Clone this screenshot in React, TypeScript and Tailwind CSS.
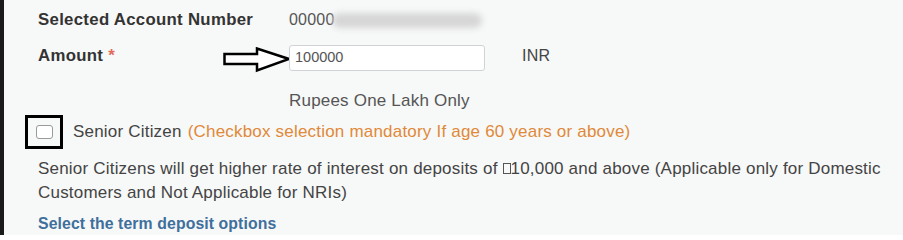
export default function App() {
  const font = { fontFamily: '"Liberation Sans", Arial, sans-serif' };
  return (
    <div className="flex h-[235px] w-[903px] overflow-hidden bg-[#f7f8f8]" style={font}>
      <div className="h-full w-[4px] shrink-0 bg-[#1a1a1a]" />
      <div className="flex flex-1 flex-col pl-[34px] pt-[9px] text-[17px] tracking-[0.2px] text-[#444]">
        {/* Account number */}
        <div className="flex h-[22px] items-center">
          <span className="w-[251px] text-[16.8px] font-bold tracking-[0.3px] text-[#333]">Selected Account Number</span>
          <span className="text-[16px] text-[#555]">00000</span>
          <span className="ml-[-3px] h-[15px] w-[150px] rounded-full bg-[#d6d6d6] blur-[3px]" />
        </div>

        {/* Amount */}
        <div className="mt-[14px] flex h-[26px] items-center">
          <span className="mb-[4px] w-[185px] text-[16.8px] font-bold tracking-[0.3px] text-[#333]">
            Amount <span className="text-[#e06b5b]">*</span>
          </span>
          <svg width="68" height="26" viewBox="0 0 68 26" className="mr-[-2px] mt-[4px]">
            <polygon
              points="1.5,7 34,7 34,1.5 66,12 34,23.5 34,17 1.5,17"
              fill="#fff"
              stroke="#000"
              strokeWidth="2.5"
              strokeLinejoin="miter"
            />
          </svg>
          <div className="flex h-[26px] w-[196px] items-center rounded-[3px] border border-[#cfd3d6] bg-white pl-[5px] text-[14.5px] tracking-normal text-[#555]">
            100000
          </div>
          <span className="mb-[4px] ml-[37px] text-[16px] text-[#444]">INR</span>
        </div>

        <div className="ml-[251px] mt-[17px] text-[#555]">Rupees One Lakh Only</div>

        {/* Senior citizen */}
        <div className="mt-[1px] flex items-center">
          <div className="ml-[-13px] flex h-[34px] w-[38px] items-center justify-center border-[3px] border-black">
            <span className="h-[14px] w-[17px] rounded-[3px] border-[1.5px] border-[#9a9a9a] bg-white" />
          </div>
          <span className="ml-[10px]">Senior Citizen</span>
          <span className="ml-[6px] text-[#e0893a]">(Checkbox selection mandatory If age 60 years or above)</span>
        </div>

        <p className="mt-[8px] leading-[24px]">
          Senior Citizens will get higher rate of interest on deposits of{" "}
          <span className="inline-block h-[11px] w-[8px] border border-[#555] align-[0px]" />
          10,000 and above (Applicable only for Domestic
          <br />
          Customers and Not Applicable for NRIs)
        </p>

        <div className="mt-[7px] text-[15.8px] font-bold tracking-[0.1px] text-[#3f6f9c]">Select the term deposit options</div>
      </div>
    </div>
  );
}
